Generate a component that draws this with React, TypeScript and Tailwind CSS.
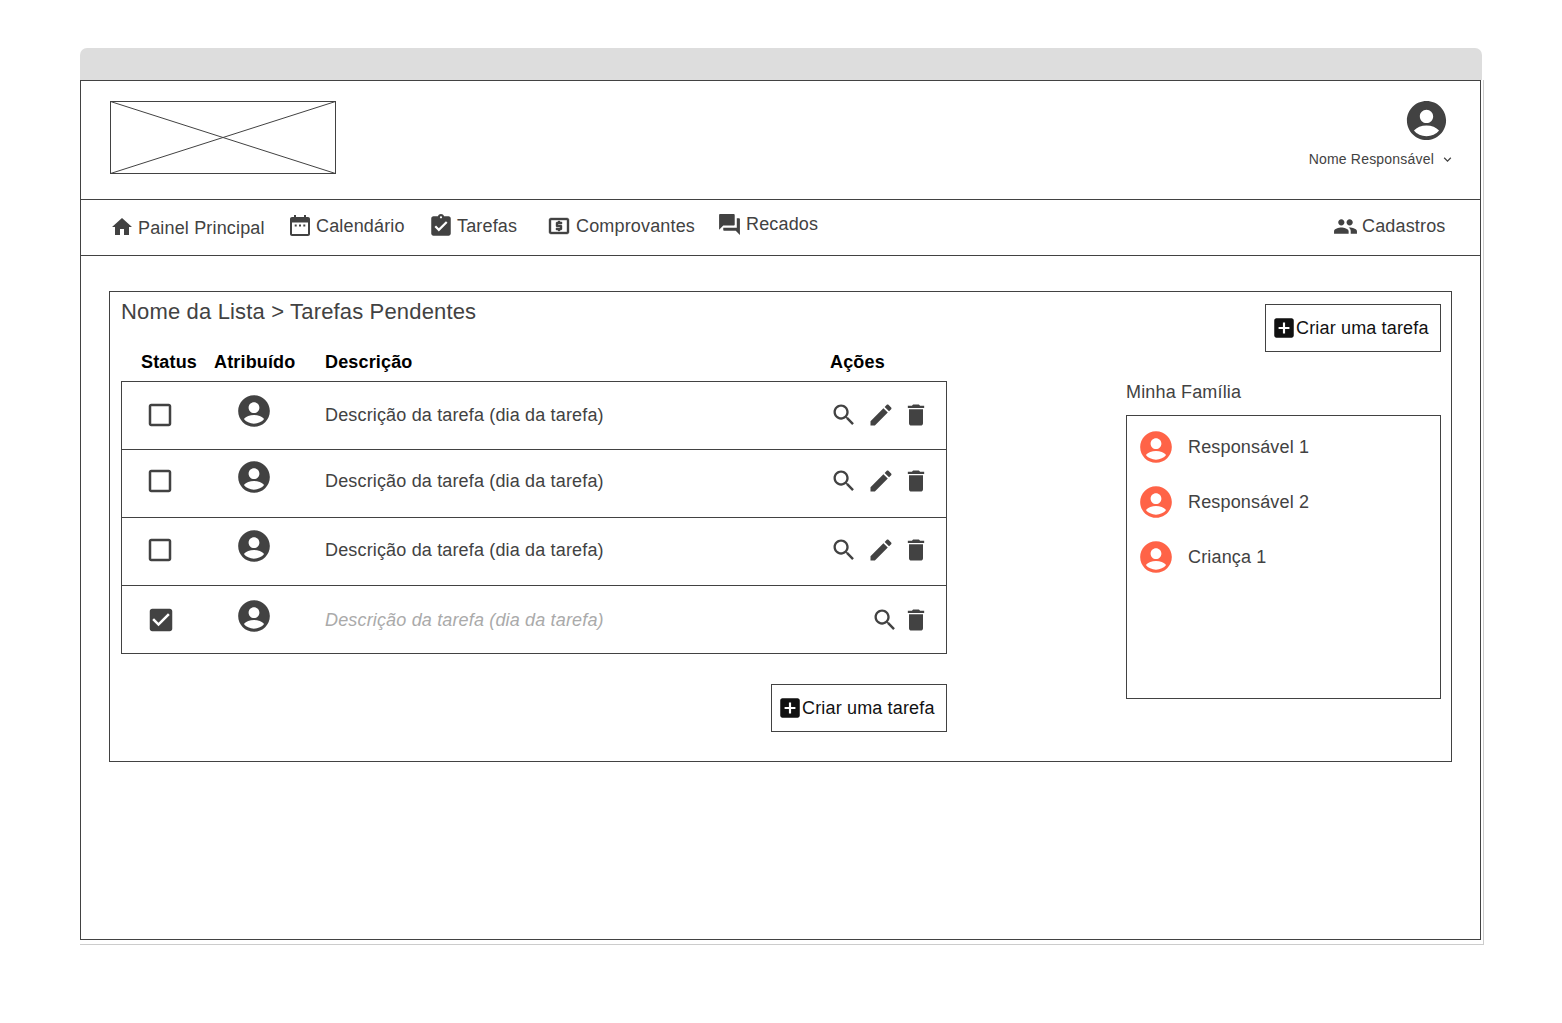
const P = {
  account: "M12 2C6.48 2 2 6.48 2 12s4.48 10 10 10 10-4.48 10-10S17.52 2 12 2zm0 4.5c1.88 0 3.4 1.52 3.4 3.4s-1.52 3.4-3.4 3.4-3.4-1.52-3.4-3.4 1.52-3.4 3.4-3.4zm0 8.1c2.6 0 5 1 6.4 2.5C17 18.9 14.6 20 12 20s-5-1.1-6.4-2.9C7 15.6 9.4 14.6 12 14.6z",
  home: "M10 20v-6h4v6h5v-8h3L12 3 2 12h3v8z",
  calendar: "M8 1v2h8V1h2v2h2c1.1 0 2 .9 2 2v15c0 1.1-.9 2-2 2H4c-1.1 0-2-.9-2-2V5c0-1.1.9-2 2-2h2V1h2zM20 8.5H4V20h16V8.5zM6.7 10.5h2v2h-2zM11 10.5h2v2h-2zM15.3 10.5h2v2h-2z",
  assignment: "M19 3h-4.18C14.4 1.84 13.3 1 12 1c-1.3 0-2.4.84-2.82 2H5c-1.1 0-2 .9-2 2v14c0 1.1.9 2 2 2h14c1.1 0 2-.9 2-2V5c0-1.1-.9-2-2-2zm-7 0c.55 0 1 .45 1 1s-.45 1-1 1-1-.45-1-1 .45-1 1-1zm-2 14l-4-4 1.41-1.41L10 14.17l6.59-6.59L18 9l-8 8z",
  atm: "M11 17h2v-1h1c.55 0 1-.45 1-1v-3c0-.55-.45-1-1-1h-3v-1h4V8h-2V7h-2v1h-1c-.55 0-1 .45-1 1v3c0 .55.45 1 1 1h3v1H9v2h2v1zm9-13H4c-1.11 0-1.99.89-1.99 2L2 18c0 1.11.89 2 2 2h16c1.11 0 2-.89 2-2V6c0-1.11-.89-2-2-2zm0 14H4V6h16v12z",
  forum: "M21 6h-2v9H6v2c0 .55.45 1 1 1h11l4 4V7c0-.55-.45-1-1-1zm-4 6V3c0-.55-.45-1-1-1H3c-.55 0-1 .45-1 1v14l4-4h10c.55 0 1-.45 1-1z",
  people: "M16 11c1.66 0 2.99-1.34 2.99-3S17.66 5 16 5c-1.66 0-3 1.34-3 3s1.34 3 3 3zm-8 0c1.66 0 2.99-1.34 2.99-3S9.66 5 8 5C6.34 5 5 6.34 5 8s1.34 3 3 3zm0 2c-2.33 0-7 1.17-7 3.5V19h14v-2.5c0-2.33-4.67-3.5-7-3.5zm8 0c-.29 0-.62.02-.97.05 1.16.84 1.97 1.97 1.97 3.45V19h6v-2.5c0-2.33-4.67-3.5-7-3.5z",
  search: "M15.5 14h-.79l-.28-.27C15.41 12.59 16 11.11 16 9.5 16 5.91 13.09 3 9.5 3S3 5.91 3 9.5 5.91 16 9.5 16c1.61 0 3.09-.59 4.23-1.57l.27.28v.79l5 4.99L20.49 19l-4.99-5zm-6 0C7.01 14 5 11.99 5 9.5S7.01 5 9.5 5 14 7.01 14 9.5 11.99 14 9.5 14z",
  edit: "M3 17.25V21h3.75L17.81 9.94l-3.75-3.75L3 17.25zM20.71 7.04c.39-.39.39-1.02 0-1.41l-2.34-2.34c-.39-.39-1.02-.39-1.41 0l-1.83 1.83 3.75 3.75 1.83-1.83z",
  trash: "M6 19c0 1.1.9 2 2 2h8c1.1 0 2-.9 2-2V7H6v12zM19 4h-3.5l-1-1h-5l-1 1H5v2h14V4z",
  add: "M19 3H5c-1.11 0-2 .9-2 2v14c0 1.1.89 2 2 2h14c1.1 0 2-.9 2-2V5c0-1.1-.9-2-2-2zm-2 10h-4v4h-2v-4H7v-2h4V7h2v4h4v2z",
  box: "M19 5v14H5V5h14m0-2H5c-1.1 0-2 .9-2 2v14c0 1.1.9 2 2 2h14c1.1 0 2-.9 2-2V5c0-1.1-.9-2-2-2z",
  checked: "M19 3H5c-1.11 0-2 .9-2 2v14c0 1.1.89 2 2 2h14c1.1 0 2-.9 2-2V5c0-1.1-.9-2-2-2zm-9 14l-5-5 1.41-1.41L10 14.17l7.59-7.59L19 8l-9 9z",
  chevron: "M16.59 8.59L12 13.17 7.41 8.59 6 10l6 6 6-6z",
};

function Icon({ d, className }: { d: string; className: string }) {
  return (
    <svg viewBox="0 0 24 24" fill="currentColor" className={"block shrink-0 " + className}>
      <path d={d} fillRule="evenodd" />
    </svg>
  );
}

function NavItem({ d, label, className, iconClass, textClass }: { d: string; label: string; className: string; iconClass: string; textClass?: string }) {
  return (
    <div className={"flex items-center h-[26px] shrink-0 " + className}>
      <Icon d={d} className={iconClass} />
      <span className={"whitespace-nowrap " + (textClass || "")}>{label}</span>
    </div>
  );
}

function CreateButton({ className }: { className: string }) {
  return (
    <div className={"flex items-center w-[176px] h-[48px] border border-[#424242] pl-[5px] text-[#111111] " + className}>
      <Icon d={P.add} className="w-[26px] h-[26px] mr-[-1px]" />
      <span className="whitespace-nowrap">Criar uma tarefa</span>
    </div>
  );
}

function TaskRow({ rowClass, done }: { rowClass: string; done?: boolean }) {
  return (
    <div className={"flex items-center shrink-0 " + rowClass}>
      <Icon d={done ? P.checked : P.box} className={"w-[30px] h-[30px] " + (done ? "ml-[24px] mr-[59px]" : "ml-[23px] mr-[60px]")} />
      <Icon d={P.account} className="w-[38px] h-[38px] mb-[8px]" />
      <span className={"ml-[52px] flex-1 whitespace-nowrap " + (done ? "italic text-[#aaaaaa]" : "")}>Descrição da tarefa (dia da tarefa)</span>
      <div className="flex items-center pr-[16.5px]">
        {done ? (
          <Icon d={P.search} className="w-[28px] h-[28px] mr-[3px]" />
        ) : (
          <>
            <Icon d={P.search} className="w-[28px] h-[28px] mr-[9px]" />
            <Icon d={P.edit} className="w-[28px] h-[28px] mr-[7px]" />
          </>
        )}
        <Icon d={P.trash} className="w-[28px] h-[28px]" />
      </div>
    </div>
  );
}

function FamilyRow({ name }: { name: string }) {
  return (
    <div className="flex items-center h-[55px] pl-[10px]">
      <Icon d={P.account} className="w-[38px] h-[38px] text-[#ff6347]" />
      <span className="ml-[13px]">{name}</span>
    </div>
  );
}

export default function App() {
  return (
    <div className="min-h-[1023px] bg-white pt-[48px] pl-[80px] text-[18px] leading-[22px] tracking-[0.16px] text-[#424242] font-['Liberation_Sans',Arial,sans-serif]">
      <div className="w-[1402px] h-[32px] bg-[#dddddd] rounded-t-[7px]" />
      <div className="w-[1404px] h-[865px] border-r border-b border-[#cccccc] pr-[2px] pb-[4px]">
        <div className="w-[1401px] h-[860px] border border-[#424242] flex flex-col">
          <header className="h-[119px] shrink-0 border-b border-[#424242] flex justify-between">
            <svg viewBox="0 0 226 73" preserveAspectRatio="none" className="block ml-[29px] mt-[20px] w-[226px] h-[73px]" fill="none" stroke="#424242" strokeWidth="1">
              <rect x="0.5" y="0.5" width="225" height="72" />
              <path d="M0.5 0.5L225.5 72.5M225.5 0.5L0.5 72.5" />
            </svg>
            <div className="flex flex-col items-end pt-[16px] pr-[25px]">
              <Icon d={P.account} className="w-[47px] h-[47px] mr-[5px]" />
              <div className="flex items-center h-[20px] mt-[5px] text-[14px] tracking-[0.2px]">
                <span className="whitespace-nowrap">Nome Responsável</span>
                <Icon d={P.chevron} className="w-[15px] h-[15px] ml-[6px]" />
              </div>
            </div>
          </header>

          <nav className="h-[56px] shrink-0 border-b border-[#424242] flex items-start">
            <NavItem d={P.home} label="Painel Principal" className="w-[178px] ml-[29px] mt-[14px]" iconClass="w-[24px] h-[24px] mr-[4px]" textClass="mt-[2px]" />
            <NavItem d={P.calendar} label="Calendário" className="w-[140px] mt-[13px]" iconClass="w-[24px] h-[24px] mr-[4px]" />
            <NavItem d={P.assignment} label="Tarefas" className="w-[119px] mt-[13px]" iconClass="w-[26px] h-[26px] mr-[3px]" />
            <NavItem d={P.atm} label="Comprovantes" className="w-[170px] mt-[13px]" iconClass="w-[24px] h-[24px] mr-[5px] -mt-[1px] [stroke:currentColor] [stroke-width:0.4]" />
            <NavItem d={P.forum} label="Recados" className="mt-[11px]" iconClass="w-[25px] h-[25px] mr-[4px]" />
            <NavItem d={P.people} label="Cadastros" className="w-[147px] ml-auto mt-[13px]" iconClass="w-[25px] h-[25px] mr-[4px]" />
          </nav>

          <main className="pt-[35px] pl-[28px]">
            <section className="w-[1343px] h-[471px] border border-[#424242] flex">
              <div className="w-[837px] pl-[11px] flex flex-col shrink-0">
                <h1 className="text-[22px] leading-[26px] mt-[7px] whitespace-nowrap">Nome da Lista &gt; Tarefas Pendentes</h1>
                <div className="flex h-[22px] mt-[26px] font-bold text-black">
                  <span className="ml-[20px] w-[73px]">Status</span>
                  <span className="w-[111px]">Atribuído</span>
                  <span className="w-[505px]">Descrição</span>
                  <span>Ações</span>
                </div>
                <div className="w-[826px] h-[273px] mt-[8px] border border-[#424242] flex flex-col">
                  <TaskRow rowClass="h-[68px] border-b border-[#424242] pb-[2px]" />
                  <TaskRow rowClass="h-[68px] border-b border-[#424242] pb-[6px]" />
                  <TaskRow rowClass="h-[68px] border-b border-[#424242] pb-[3px]" />
                  <TaskRow rowClass="h-[67px] pt-[1px]" done />
                </div>
                <CreateButton className="mt-[30px] self-end" />
              </div>
              <div className="ml-auto pr-[10px] flex flex-col items-end">
                <CreateButton className="mt-[12px]" />
                <div className="w-[315px] mt-[29px] h-[22px]">Minha Família</div>
                <div className="w-[315px] h-[284px] mt-[12px] border border-[#424242] pt-[3px]">
                  <FamilyRow name="Responsável 1" />
                  <FamilyRow name="Responsável 2" />
                  <FamilyRow name="Criança 1" />
                </div>
              </div>
            </section>
          </main>
        </div>
      </div>
    </div>
  );
}
